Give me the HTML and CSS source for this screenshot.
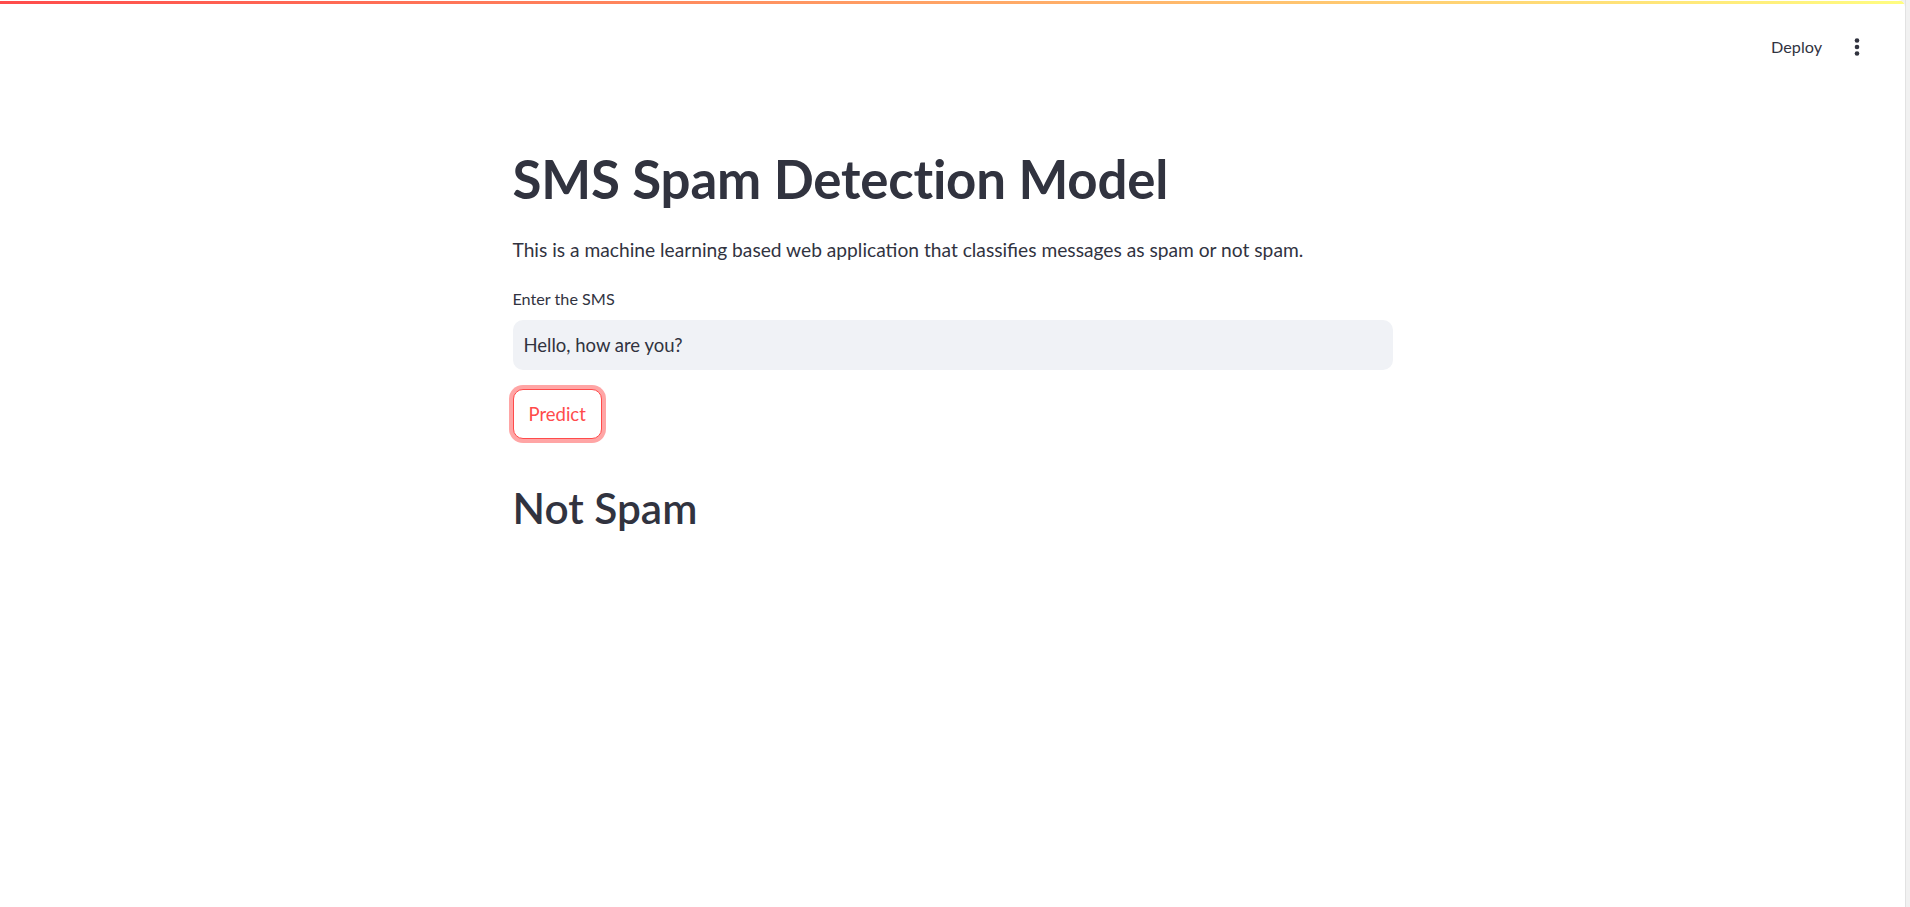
FILE: index.html
```html
<!DOCTYPE html>
<html lang="en">
<head>
<meta charset="utf-8">
<title>SMS Spam Detection Model</title>
<link rel="stylesheet" href="styles.css">
</head>
<body>
<div class="window">
  <div class="app">
    <div class="decoration"></div>
    <header class="toolbar">
      <span class="deploy">Deploy</span>
      <button class="menu" aria-label="Main menu">
        <svg width="6" height="20" viewBox="0 0 6 20" aria-hidden="true">
          <circle cx="3" cy="3.5" r="2.3" fill="#31333F"/>
          <circle cx="3" cy="10" r="2.3" fill="#31333F"/>
          <circle cx="3" cy="16.5" r="2.3" fill="#31333F"/>
        </svg>
      </button>
    </header>
    <main class="block">
      <h1 class="title">SMS Spam Detection Model</h1>
      <p class="intro">This is a machine learning based web application that classifies messages as spam or not spam.</p>
      <label class="field-label">Enter the SMS</label>
      <div class="text-input">Hello, how are you?</div>
      <button class="predict">Predict</button>
      <h2 class="result">Not Spam</h2>
    </main>
  </div>
  <div class="scroll-edge"></div>
</div>
</body>
</html>
```

FILE: styles.css
```css
html, body {
  margin: 0;
  padding: 0;
  height: 100%;
}

body {
  background: #f0f0f0;
  font-family: Lato, "Noto Sans", sans-serif;
  color: #31333F;
}

.window {
  display: flex;
  height: 907px;
}

.app {
  flex: 1;
  background: #ffffff;
  border-top-right-radius: 7px;
  overflow: hidden;
  display: flex;
  flex-direction: column;
}

.decoration {
  height: 3px;
  margin-top: 1px;
  background: linear-gradient(90deg, rgb(255, 75, 75), rgb(255, 253, 128));
  flex: none;
}

.scroll-edge {
  width: 4px;
  background: #f1f1f1;
  border-left: 1px solid #e2e2e2;
}

.toolbar {
  height: 86px;
  display: flex;
  align-items: center;
  justify-content: flex-end;
  padding-right: 28px;
  flex: none;
}

.deploy {
  font-size: 16.2px;
  line-height: 1.2;
  color: #31333F;
  margin-right: 15px;
}

.menu {
  width: 40px;
  height: 40px;
  border: none;
  background: transparent;
  padding: 0;
  display: flex;
  align-items: center;
  justify-content: center;
}

.block {
  width: 880px;
  margin: 0 auto;
  display: flex;
  flex-direction: column;
  align-items: flex-start;
}

.title {
  margin: 58px 0 0 0;
  font-size: 52.8px;
  font-weight: 700;
  line-height: 62px;
  letter-spacing: -0.2px;
}

.intro {
  margin: 25px 0 0 0;
  font-size: 19.2px;
  line-height: 29.6px;
}

.field-label {
  margin-top: 24px;
  font-size: 16.2px;
  line-height: 20px;
}

.text-input {
  margin-top: 11px;
  box-sizing: border-box;
  width: 100%;
  height: 50px;
  background: #f0f2f6;
  border-radius: 10px;
  padding: 0 11px;
  display: flex;
  align-items: center;
  font-size: 18.5px;
  line-height: 1.2;
}

.predict {
  margin-top: 19px;
  box-sizing: border-box;
  height: 50px;
  padding: 0 15px;
  background: #ffffff;
  border: 1px solid #ff4b4b;
  border-radius: 10px;
  box-shadow: 0 0 0 4px rgba(255, 75, 75, 0.5);
  color: #ff4b4b;
  font-family: Lato, "Noto Sans", sans-serif;
  font-size: 18.5px;
  line-height: 1.2;
}

.result {
  margin: 44px 0 0 0;
  font-size: 42.4px;
  font-weight: 600;
  line-height: 1.2;
}
```
